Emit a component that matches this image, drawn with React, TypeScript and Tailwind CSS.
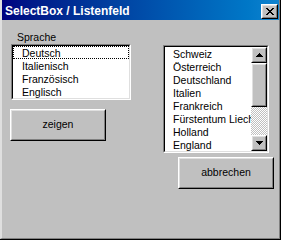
import type { ReactNode } from "react";

const font = "font-['Liberation_Sans',Arial,sans-serif]";

// Win98 style raised box (buttons, scrollbar parts)
const Raised = ({ className, children }: { className?: string; children?: ReactNode }) => (
  <div className={`border border-t-white border-l-white border-r-black border-b-black ${className ?? ""}`}>
    <div className="w-full h-full border border-t-[#dfdfdf] border-l-[#dfdfdf] border-r-[#808080] border-b-[#808080] bg-[#c0c0c0] flex items-center justify-center">
      {children}
    </div>
  </div>
);

// sunken listbox frame
const Sunken = ({ className, children }: { className?: string; children?: ReactNode }) => (
  <div className={`border border-t-[#808080] border-l-[#808080] border-r-white border-b-white ${className ?? ""}`}>
    <div className="w-full h-full border border-t-black border-l-black border-r-[#dfdfdf] border-b-[#dfdfdf] bg-white flex overflow-hidden">
      {children}
    </div>
  </div>
);

const xBits = ["XX....XX", ".XX..XX.", "..XXXX..", "...XX...", "..XXXX..", ".XX..XX.", "XX....XX"];

const CloseGlyph = () => (
  <svg width="8" height="7" viewBox="0 0 8 7" shapeRendering="crispEdges">
    {xBits.map((row, y) =>
      row.split("").map((c, x) => (c === "X" ? <rect key={`${x}-${y}`} x={x} y={y} width="1" height="1" fill="#000" /> : null))
    )}
  </svg>
);

const Arrow = ({ down }: { down?: boolean }) => (
  <svg width="7" height="4" viewBox="0 0 7 4" shapeRendering="crispEdges">
    {down ? <path d="M0 0H7L3.5 4Z" fill="#000" /> : <path d="M3.5 0L7 4H0Z" fill="#000" />}
  </svg>
);

const sprachen = ["Deutsch", "Italienisch", "Französisch", "Englisch"];
const laender = ["Schweiz", "Österreich", "Deutschland", "Italien", "Frankreich", "Fürstentum Liechtenstein", "Holland", "England"];

export default function App() {
  return (
    <div className={`w-[283px] h-[241px] bg-white overflow-hidden ${font}`}>
      <div className="w-[281px] h-[240px] border-r border-b border-black">
        <div className="w-full h-full border-r border-b border-[#808080] border-l-2 border-l-[#dfdfdf] bg-[#c0c0c0] flex flex-col">
          {/* title bar */}
          <div className="h-[20px] bg-linear-to-r from-[#000080] to-[#1084d0] flex items-center pl-[3px] pr-[1px]">
            <span className="text-white font-bold text-[12px] leading-[14px] pt-[1px] whitespace-nowrap">SelectBox / Listenfeld</span>
            <Raised className="ml-auto w-[17px] h-[15px] mt-[2px]">
              <CloseGlyph />
            </Raised>
          </div>

          {/* client */}
          <div className="flex text-[10.5px] text-black">
            <div className="ml-[8px] flex flex-col">
              <div className="mt-[11px] h-[13px] leading-[13px] ml-[7px]">Sprache</div>
              <Sunken className="ml-[1px] w-[120px] h-[56px]">
                <div className="flex flex-col w-full">
                  {sprachen.map((s, i) => (
                    <div
                      key={s}
                      className={`h-[13px] leading-[12px] pl-[8px] whitespace-nowrap ${i === 0 ? "border border-dotted border-black" : "border border-transparent"}`}
                    >
                      {s}
                    </div>
                  ))}
                </div>
              </Sunken>
              <Raised className="mt-[9px] w-[96px] h-[32px]">
                <span className="pb-[1px]">zeigen</span>
              </Raised>
            </div>

            <div className="ml-[32px] mt-[25px] flex flex-col">
              <Sunken className="w-[106px] h-[108px]">
                <div className="flex-1 flex flex-col overflow-hidden pt-[1px]">
                  {laender.map((l) => (
                    <div key={l} className="h-[13px] leading-[13px] pl-[8px] whitespace-nowrap">
                      {l}
                    </div>
                  ))}
                </div>
                <div className="w-[16px] flex flex-col">
                  <Raised className="w-[16px] h-[16px]">
                    <Arrow />
                  </Raised>
                  <Raised className="w-[16px] h-[44px]" />
                  <div className="flex-1 bg-[repeating-conic-gradient(#c0c0c0_0_25%,#fff_0_50%)] bg-[length:2px_2px]" />
                  <Raised className="w-[16px] h-[16px]">
                    <Arrow down />
                  </Raised>
                </div>
              </Sunken>
              <Raised className="mt-[4px] ml-[15px] w-[96px] h-[32px]">
                <span className="pb-[1px]">abbrechen</span>
              </Raised>
            </div>
          </div>
        </div>
      </div>
    </div>
  );
}
